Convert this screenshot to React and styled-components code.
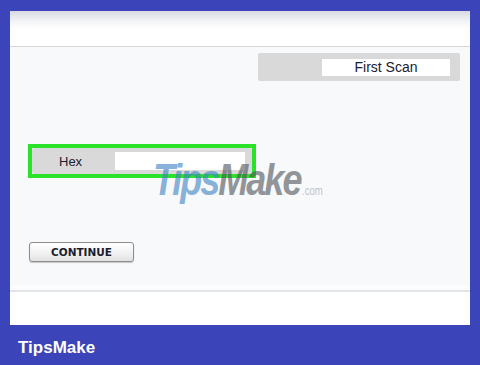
import React from "react";
import styled, { createGlobalStyle } from "styled-components";

const GlobalStyle = createGlobalStyle`
  html, body {
    margin: 0;
    padding: 0;
    background: #3b44b8;
    font-family: "Liberation Sans", Arial, sans-serif;
  }
`;

const Frame = styled.div`
  width: 480px;
  height: 365px;
  background: #3b44b8;
  box-sizing: border-box;
  padding: 11px 10px 0 10px;
  display: flex;
  flex-direction: column;
`;

const Window = styled.div`
  height: 314px;
  background: #ffffff;
  display: flex;
  flex-direction: column;
`;

const TopBar = styled.div`
  height: 35px;
  background: linear-gradient(#d9dae1 0px, #f2f3f6 10px, #ffffff 18px);
  border-bottom: 1px solid #d6d7da;
`;

const Content = styled.div`
  position: relative;
  height: 245px;
  background: linear-gradient(#f8f9fb 0, #f8f9fb 238px, #fbfcfd 238px);
  box-sizing: border-box;
  padding: 6px 10px 0 18px;
  display: flex;
  flex-direction: column;
  border-bottom: 2px solid #e3e4e6;
`;

const ScanRow = styled.div`
  display: flex;
  justify-content: flex-end;
`;

const GrayBox = styled.div`
  background: #d9d9d9;
  border-radius: 2px;
  display: flex;
  align-items: center;
  box-sizing: border-box;
`;

const ScanBox = styled(GrayBox)`
  width: 202px;
  height: 28px;
  justify-content: flex-end;
  padding-right: 10px;
`;

const Field = styled.div`
  background: #ffffff;
  height: ${(p) => p.h}px;
  width: ${(p) => p.w}px;
  display: flex;
  align-items: center;
  justify-content: center;
  font-size: 14px;
  color: #1b2033;
`;

const Highlight = styled.div`
  margin-top: 63px;
  width: 228px;
  height: 34px;
  box-sizing: border-box;
  border: 4px solid #2be22b;
  display: flex;
`;

const HexBox = styled(GrayBox)`
  flex: 1;
  padding: 0 7px 0 27px;
  justify-content: space-between;
  font-size: 13px;
  color: #1b2033;
`;

const Continue = styled.button`
  margin-top: 64px;
  width: 105px;
  height: 20px;
  padding: 0;
  border: 1px solid #8c8c8c;
  border-radius: 3px;
  background: linear-gradient(#ffffff, #f0f0f0 60%, #e2e2e2);
  box-shadow: 0 1px 1px rgba(0, 0, 0, 0.2);
  font-family: "DejaVu Sans", Verdana, sans-serif;
  font-weight: bold;
  font-size: 10.5px;
  color: #1a1d2e;
  margin-left: 1px;
`;

const Watermark = styled.div`
  position: absolute;
  left: 143px;
  top: 107px;
  font-family: "Liberation Sans", Arial, sans-serif;
  font-weight: bold;
  font-style: italic;
  font-size: 45px;
  letter-spacing: -2.5px;
  opacity: 0.6;
  pointer-events: none;
  white-space: nowrap;
  transform: scaleX(0.8);
  transform-origin: left top;
`;

const WTips = styled.span`
  color: #3b82c4;
`;

const WMake = styled.span`
  color: #4e5359;
`;

const WCom = styled.span`
  color: #9aa0a6;
  font-size: 12px;
  font-style: normal;
  font-weight: normal;
  letter-spacing: 0;
  margin-left: 2px;
`;

const Footer = styled.div`
  flex: 1;
  padding: 13px 0 0 8px;
  color: #ffffff;
  font-weight: bold;
  font-size: 17px;
`;

export default function App() {
  return (
    <>
      <GlobalStyle />
      <Frame>
        <Window>
          <TopBar />
          <Content>
            <ScanRow>
              <ScanBox>
                <Field w={128} h={17}>First Scan</Field>
              </ScanBox>
            </ScanRow>
            <Highlight>
              <HexBox>
                <span>Hex</span>
                <Field w={130} h={18} />
              </HexBox>
            </Highlight>
            <div>
              <Continue>CONTINUE</Continue>
            </div>
            <Watermark>
              <WTips>Tips</WTips>
              <WMake>Make</WMake>
              <WCom>.com</WCom>
            </Watermark>
          </Content>
        </Window>
        <Footer>TipsMake</Footer>
      </Frame>
    </>
  );
}
